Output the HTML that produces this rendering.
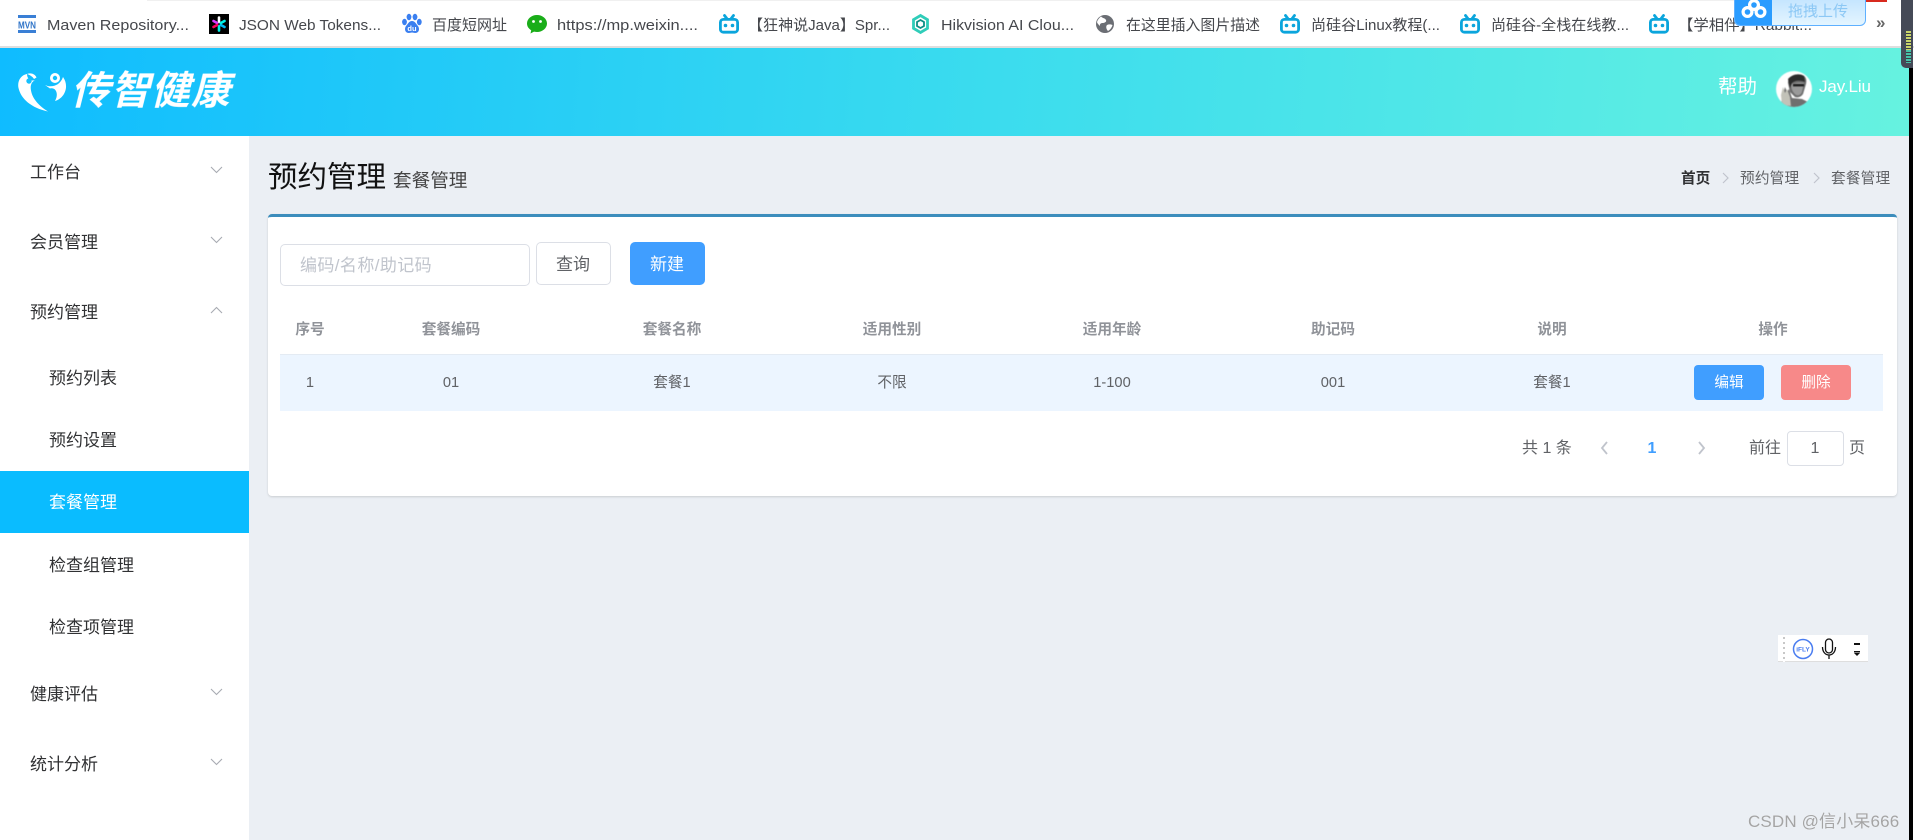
<!DOCTYPE html>
<html lang="zh">
<head>
<meta charset="utf-8">
<title>传智健康</title>
<style>
html,body{margin:0;padding:0;width:1914px;height:840px;overflow:hidden;background:#fff}
body{position:relative;font-family:"Liberation Sans","Noto Sans CJK SC",sans-serif}
.a{position:absolute}
.t{position:absolute;white-space:nowrap;line-height:24px;height:24px;margin-top:1px}
.c{transform:translateX(-50%)}
.m{font-size:17px;color:#303133}
.h{font-size:14.65px;color:#909399;font-weight:700}
.d{font-size:14.65px;color:#606266}
.p{font-size:16px;color:#606266}
.b{font-size:14.65px;color:#606266}
svg{position:absolute;overflow:visible}
</style>
</head>
<body>
<!-- top bookmark bar -->
<div class="a" style="left:147px;top:0;width:1600px;height:1px;background:#f0f0f0"></div>
<div class="a" style="left:0;top:46px;width:1914px;height:2px;background:#dedede"></div>
<svg style="left:0;top:0" width="1914" height="46" font-family="'Liberation Sans','Noto Sans CJK SC',sans-serif" font-size="15" fill="#45474c">
<text x="47" y="30" textLength="142" lengthAdjust="spacingAndGlyphs">Maven Repository...</text>
<text x="239" y="30" textLength="142" lengthAdjust="spacingAndGlyphs">JSON Web Tokens...</text>
<text x="432" y="30" textLength="75" lengthAdjust="spacingAndGlyphs">百度短网址</text>
<text x="557" y="30" textLength="141" lengthAdjust="spacingAndGlyphs">https://mp.weixin....</text>
<text x="748" y="30" textLength="142" lengthAdjust="spacingAndGlyphs">【狂神说Java】Spr...</text>
<text x="941" y="30" textLength="133" lengthAdjust="spacingAndGlyphs">Hikvision AI Clou...</text>
<text x="1126" y="30" textLength="134" lengthAdjust="spacingAndGlyphs">在这里插入图片描述</text>
<text x="1311" y="30" textLength="129" lengthAdjust="spacingAndGlyphs">尚硅谷Linux教程(...</text>
<text x="1491" y="30" textLength="138" lengthAdjust="spacingAndGlyphs">尚硅谷-全栈在线教...</text>
<text x="1678" y="30" textLength="134" lengthAdjust="spacingAndGlyphs">【学相伴】Rabbit...</text>
<text x="1876" y="28" font-size="17" font-weight="700" fill="#666">»</text>
<!-- MVN -->
<rect x="18" y="15" width="18" height="3" fill="#3a7fd5"/><rect x="18" y="30" width="18" height="3" fill="#3a7fd5"/>
<text x="27" y="28.500" font-size="10" font-weight="700" fill="#2f74c8" text-anchor="middle" textLength="18" lengthAdjust="spacingAndGlyphs">MVN</text>
<!-- JWT -->
<rect x="209" y="14" width="20" height="20" fill="#000"/>
<g stroke-width="2.600" stroke-linecap="round">
<path d="M219 17.500V22" stroke="#fff"/><path d="M219 26V30.500" stroke="#00f2e6"/>
<path d="M213.500 21l3.600 2" stroke="#d63aff"/><path d="M220.900 25l3.600 2" stroke="#00b9f1"/>
<path d="M213.500 27l3.600-2" stroke="#fb015b"/><path d="M220.900 23l3.600-2" stroke="#00f2e6"/>
</g>
<!-- baidu -->
<g fill="#3a7ff0">
<ellipse cx="404.500" cy="22" rx="2.400" ry="3.200"/><ellipse cx="409" cy="17" rx="2.400" ry="3.200"/><ellipse cx="415" cy="17" rx="2.400" ry="3.200"/><ellipse cx="419.300" cy="22" rx="2.400" ry="3.200"/>
<path d="M412 21c3 0 4 3 6 5 2 3 1 7-3 7-1 0-2-.5-3-.5s-2 .5-3 .5c-4 0-5-4-3-7 2-2 3-5 6-5z"/>
</g>
<text x="412" y="31" font-size="7.500" font-weight="700" fill="#fff" text-anchor="middle">du</text>
<!-- wechat -->
<path d="M537 15c5.500 0 10 3.800 10 8.500s-4.500 8.500-10 8.500c-1 0-2-.1-3-.4l-3.500 1.900.7-3.300c-2.600-1.500-4.200-3.900-4.200-6.700 0-4.700 4.500-8.500 10-8.500z" fill="#1aad19"/>
<circle cx="533.500" cy="21.500" r="1.400" fill="#fff"/><circle cx="540.500" cy="21.500" r="1.400" fill="#fff"/>
<!-- bilibili x5 -->
<g id="bl" fill="none" stroke="#0ba5dc" stroke-width="2.800" stroke-linecap="round">
<rect x="720.400" y="19.400" width="17.200" height="12.800" rx="3"/><path d="M724.500 15.500l2.300 3M733.500 15.500l-2.300 3"/>
<circle cx="725.500" cy="25.500" r="1" stroke-width="1.600" fill="#0ba5dc"/><circle cx="732.500" cy="25.500" r="1" stroke-width="1.600" fill="#0ba5dc"/>
</g>
<use href="#bl" x="561"/><use href="#bl" x="741"/><use href="#bl" x="930"/>
<!-- hik -->
<path d="M920.500 15.500l7 4.200v8.600l-7 4.200-7-4.200v-8.600z" fill="none" stroke="#2fcdb9" stroke-width="2.800"/>
<path d="M920.500 20l3.500 2v4l-3.500 2-3.500-2v-4z" fill="none" stroke="#0d8f86" stroke-width="1.800"/>
<!-- globe -->
<circle cx="1105" cy="24" r="9" fill="#6b6e74"/>
<path d="M1101 16.500c2 2 4 1.500 5 3.500s-2 3-3.500 3-3 1-2.500 3c-1.200-1-3-3-3-4 .5-2 2-4 4-5.500zM1107 25c2-1 4-.5 5.500 0-.5 2-2 4.500-4.500 6-1.500-1.500-2.500-4.500-1-6z" fill="#fff"/>
</svg>
<!-- upload widget -->
<div class="a" style="left:1865px;top:0;width:22px;height:2px;background:#d82a1f"></div>
<div class="a" style="left:1734px;top:-2px;width:130px;height:26px;border:1px solid #5eb0ff;border-radius:0 0 6px 6px;background:linear-gradient(#c4e5ff,#e4f5ff);overflow:hidden">
<div class="a" style="left:0;top:0;width:37px;height:26px;background:#2a9cff"></div>
<div class="t" style="left:53px;top:0;font-size:15px;color:#8cc8f5">拖拽上传</div>
</div>
<svg style="left:1741px;top:0" width="26" height="19" fill="none" stroke="#fff" stroke-width="3.200">
<circle cx="13" cy="5" r="4.400"/><circle cx="6.500" cy="12" r="4.400"/><circle cx="19.500" cy="12" r="4.400"/>
</svg>

<!-- header -->
<div class="a" style="left:0;top:48px;width:1909px;height:88px;background:linear-gradient(95deg,#0fbcff 0%,#3bdcee 52%,#66f2e0 100%)"></div>
<svg style="left:18px;top:73px;filter:blur(.3px)" width="50" height="39" fill="#fff">
<path d="M9 1C3 2-1 8 .5 15c2.500 11 13 20 29.500 23.500-8-5-15.500-12-17-21-1-5 .5-9 4.500-10.500-4 1.500-8.500-.5-8.500-6z"/>
<path d="M9 1c4-1.500 8 0 9.500 3.500l-2.500 1.500C14.500 3.500 12 2 9 1z"/>
<circle cx="11" cy="8" r="2.700" fill="#14c0ff"/>
<path d="M27 12c6 3 15 1 18-8 6.500 9 2 21-8 24 4-7 1-14-5-12.500z"/>
<circle cx="37" cy="5" r="5"/><circle cx="37" cy="5" r="2.200" fill="#14c0ff"/>
</svg>
<div class="a" style="left:74px;top:69px;font-size:39px;line-height:46px;font-weight:700;color:#fff;letter-spacing:1px;transform:skewX(-14deg);white-space:nowrap;filter:blur(.3px)">传智健康</div>
<div class="t" style="left:1718px;top:74px;font-size:19.500px;color:#fff">帮助</div>
<svg style="left:1776px;top:71px;filter:blur(.5px)" width="36" height="36">
<defs><clipPath id="cl"><circle cx="18" cy="18" r="18"/></clipPath></defs>
<circle cx="18" cy="18" r="18" fill="#fff"/>
<g clip-path="url(#cl)">
<path d="M12 12c0-7 8-10 14-8 4 1 5 5 4 9l-3 10c-2 3-5 4-8 3l-5-5z" fill="#6b6b6b"/>
<path d="M15 13c3-1 9-2 13-1l-2 9c-1 3-4 4-6 3-3-2-5-6-5-11z" fill="#9a9a9a"/>
<path d="M12 8c4-5 12-6 16-3l1 6c-5-2-10-2-13 1l-2 5z" fill="#2b2b2b"/>
<rect x="17" y="13" width="11" height="2.400" fill="#1c1c1c"/>
<path d="M4 36l3-12 2-8 2 5 2-3 3 9 10 1 8 4 3 4z" fill="#6f6f6f"/>
<path d="M6 34l-1-10 2-8 2 6 2-4 3 8 1 9z" fill="#c2c2b8"/>
</g>
</svg>
<div class="t" style="left:1819px;top:74px;font-size:17px;color:#fff;letter-spacing:-.1px">Jay.Liu</div>

<!-- main bg -->
<div class="a" style="left:249px;top:136px;width:1660px;height:704px;background:#ebeff4"></div>
<!-- right edge -->
<div class="a" style="left:1909px;top:60px;width:4px;height:780px;background:#000"></div>
<div class="a" style="left:1901px;top:0;width:12px;height:68px;background:#454a57;border-radius:0 0 0 5px"></div>
<div class="a" style="left:1906px;top:31px;width:5px;height:32px;background:repeating-linear-gradient(#c9d46a 0 2px,#3a3f48 2px 3px)"></div>
<div class="a" style="left:1906px;top:50px;width:5px;height:13px;background:repeating-linear-gradient(#45c2a8 0 2px,#3a3f48 2px 3px)"></div>

<!-- sidebar -->
<div class="a" style="left:0;top:136px;width:249px;height:704px;background:#fff"></div>
<div class="a" style="left:0;top:471px;width:249px;height:62px;background:#0abcff"></div>
<div class="t m" style="left:30px;top:160px">工作台</div>
<div class="t m" style="left:30px;top:230px">会员管理</div>
<div class="t m" style="left:30px;top:300px">预约管理</div>
<div class="t m" style="left:49px;top:366px">预约列表</div>
<div class="t m" style="left:49px;top:428px">预约设置</div>
<div class="t m" style="left:49px;top:490px;color:#fff">套餐管理</div>
<div class="t m" style="left:49px;top:553px">检查组管理</div>
<div class="t m" style="left:49px;top:615px">检查项管理</div>
<div class="t m" style="left:30px;top:682px">健康评估</div>
<div class="t m" style="left:30px;top:752px">统计分析</div>
<svg style="left:0;top:0" width="249" height="840" fill="none" stroke="#a8abb2" stroke-width="1.100">
<path d="M211 167l5.500 5.500 5.500-5.500"/>
<path d="M211 237l5.500 5.500 5.500-5.500"/>
<path d="M211 313l5.500-5.500 5.500 5.500"/>
<path d="M211 689l5.500 5.500 5.500-5.500"/>
<path d="M211 759l5.500 5.500 5.500-5.500"/>
</svg>

<!-- title -->
<div class="a" style="left:268px;top:158px;font-size:29.500px;line-height:40px;color:#111;white-space:nowrap">预约管理</div>
<div class="t" style="left:393px;top:168px;font-size:18.600px;color:#444">套餐管理</div>
<!-- breadcrumb -->
<div class="t b" style="left:1681px;top:166px;font-weight:700;color:#303133">首页</div>
<div class="t b" style="left:1740px;top:166px;letter-spacing:.2px">预约管理</div>
<div class="t b" style="left:1831px;top:166px;letter-spacing:.2px">套餐管理</div>
<svg style="left:0;top:0" width="1914" height="840" fill="none" stroke="#c0c4cc" stroke-width="1.200">
<path d="M1723 173l5 5-5 5"/><path d="M1814 173l5 5-5 5"/>
</svg>

<!-- card -->
<div class="a" style="left:268px;top:214px;width:1629px;height:279px;background:#fff;border-top:3px solid #3c8dbc;border-radius:4px;box-shadow:0 1px 2px rgba(0,0,0,.14)"></div>
<!-- search -->
<div class="a" style="left:280px;top:244px;width:248px;height:40px;border:1px solid #dcdfe6;border-radius:5px;background:#fff"></div>
<div class="t" style="left:300px;top:253px;font-size:17px;color:#c0c4cc;letter-spacing:.4px">编码/名称/助记码</div>
<div class="a" style="left:536px;top:242px;width:73px;height:41px;border:1px solid #dcdfe6;border-radius:5px;background:#fff"></div>
<div class="t c" style="left:573px;top:252px;font-size:17px;color:#606266">查询</div>
<div class="a" style="left:630px;top:242px;width:75px;height:43px;border-radius:5px;background:#409eff"></div>
<div class="t c" style="left:667px;top:252px;font-size:17px;color:#fff">新建</div>
<!-- table -->
<div class="t h c" style="left:310px;top:317px">序号</div>
<div class="t h c" style="left:451px;top:317px">套餐编码</div>
<div class="t h c" style="left:672px;top:317px">套餐名称</div>
<div class="t h c" style="left:892px;top:317px">适用性别</div>
<div class="t h c" style="left:1112px;top:317px">适用年龄</div>
<div class="t h c" style="left:1333px;top:317px">助记码</div>
<div class="t h c" style="left:1552px;top:317px">说明</div>
<div class="t h c" style="left:1773px;top:317px">操作</div>
<div class="a" style="left:280px;top:354px;width:1603px;height:57px;background:#ecf5ff;border-top:1px solid #e4ebf3;box-sizing:border-box"></div>
<div class="t d c" style="left:310px;top:370px">1</div>
<div class="t d c" style="left:451px;top:370px">01</div>
<div class="t d c" style="left:672px;top:370px">套餐1</div>
<div class="t d c" style="left:892px;top:370px">不限</div>
<div class="t d c" style="left:1112px;top:370px">1-100</div>
<div class="t d c" style="left:1333px;top:370px">001</div>
<div class="t d c" style="left:1552px;top:370px">套餐1</div>
<div class="a" style="left:1694px;top:365px;width:70px;height:35px;border-radius:4px;background:#409eff"></div>
<div class="t d c" style="left:1729px;top:370px;color:#fff">编辑</div>
<div class="a" style="left:1781px;top:365px;width:70px;height:35px;border-radius:4px;background:#f78989"></div>
<div class="t d c" style="left:1816px;top:370px;color:#fff">删除</div>
<!-- pagination -->
<div class="t p" style="left:1522px;top:436px">共 1 条</div>
<div class="t p c" style="left:1652px;top:436px;font-weight:700;color:#409eff">1</div>
<div class="t p" style="left:1749px;top:436px">前往</div>
<div class="a" style="left:1787px;top:431px;width:55px;height:33px;border:1px solid #dcdfe6;border-radius:4px;background:#fff"></div>
<div class="t p c" style="left:1815px;top:436px">1</div>
<div class="t p" style="left:1849px;top:436px">页</div>
<svg style="left:0;top:0" width="1914" height="840" fill="none" stroke="#c0c4cc" stroke-width="1.800">
<path d="M1607 442l-5 6 5 6"/><path d="M1699 442l5 6-5 6"/>
</svg>

<!-- iFly widget -->
<div class="a" style="left:1778px;top:635px;width:90px;height:27px;background:#fff;border-bottom:1px solid #dedede;box-sizing:border-box"></div>
<div class="a" style="left:1783px;top:637px;width:2px;height:25px;background:repeating-linear-gradient(#c8c8c8 0 2px,#fff 2px 5px)"></div>
<svg style="left:1778px;top:635px" width="90" height="27">
<circle cx="25" cy="14" r="9.500" fill="#fff" stroke="#4a7df0" stroke-width="1.500"/>
<text x="25" y="16.500" font-size="6.500" font-weight="700" fill="#4a7df0" text-anchor="middle" font-family="'Liberation Sans',sans-serif">iFLY</text>
<rect x="47.500" y="4" width="7" height="14" rx="3.500" fill="#fff" stroke="#111" stroke-width="1.300"/>
<path d="M44.500 12c0 5 3 8 6.500 8s6.500-3 6.500-8M51 20v4" fill="none" stroke="#111" stroke-width="1.300"/>
<rect x="76" y="8" width="6" height="2" fill="#111"/><rect x="76" y="16" width="6" height="1.500" fill="#111"/>
<path d="M76 18h6l-3 3z" fill="#111"/>
</svg>
<!-- watermark -->
<div class="t" style="left:1748px;top:809px;font-size:17px;color:#a4a4a4;letter-spacing:.15px;text-shadow:0 0 1px rgba(255,255,255,.6)">CSDN @信小呆666</div>
</body>
</html>
